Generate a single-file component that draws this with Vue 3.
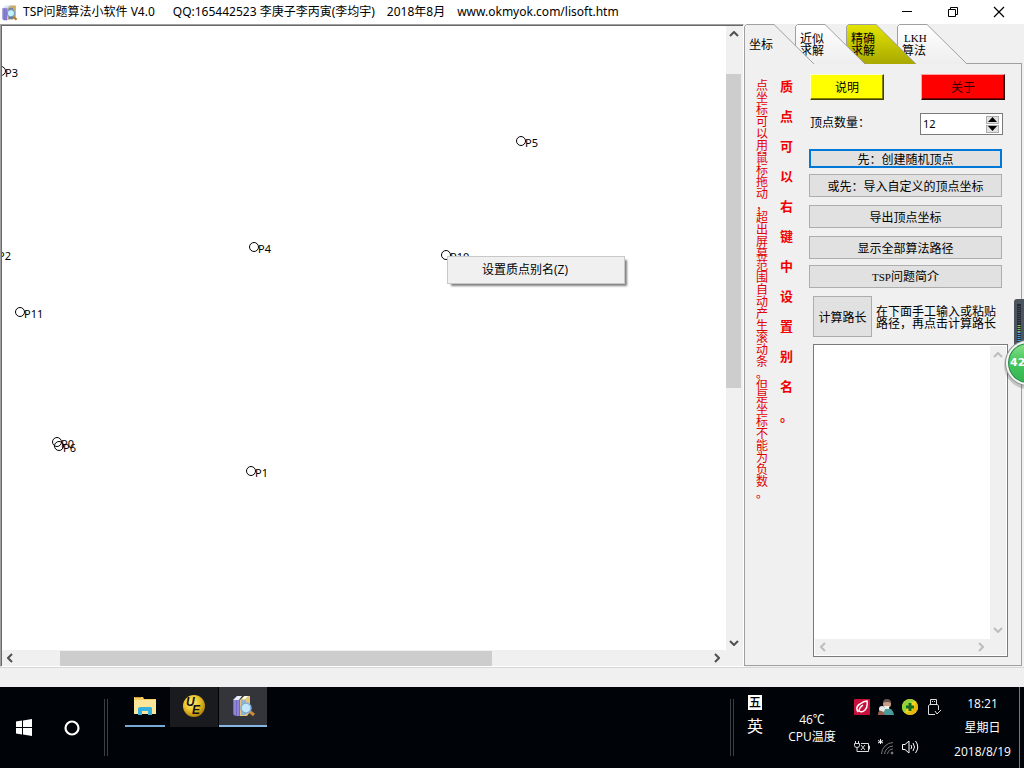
<script setup>
import { ref } from 'vue'

const points = [
  { name: 'P3', x: -1, y: 45 },
  { name: 'P5', x: 519, y: 115 },
  { name: 'P4', x: 252, y: 221 },
  { name: 'P2', x: -8, y: 228 },
  { name: 'P10', x: 444, y: 229 },
  { name: 'P11', x: 18, y: 286 },
  { name: 'P0', x: 55, y: 416 },
  { name: 'P6', x: 57, y: 420 },
  { name: 'P1', x: 249, y: 445 }
]

const tabs = [
  { id: 'coord', lines: ['坐标'], kind: 'active' },
  { id: 'approx', lines: ['近似', '求解'], kind: 'light' },
  { id: 'exact', lines: ['精确', '求解'], kind: 'gold' },
  { id: 'lkh', lines: ['LKH', '算法'], kind: 'light' }
]
const fills = { active: '#f0f0f0', light: 'url(#tabLight)', gold: 'url(#tabGold)' }

const count = ref('12')
const path = ref('')
</script>

<template>
  <div class="screen">
    <header class="titlebar">
      <svg class="app-icon" viewBox="0 0 24 24" aria-hidden="true">
        <path d="M2 6 6 2h5L8 6z" fill="#dfe4fb" />
        <path d="M8 6l3-4h4v17l-5 4z" fill="#b9cdf0" />
        <path d="M2 6h7v17H4l-2-2z" fill="#7468c4" />
        <path d="M4 6v16M7 6v16" stroke="#a9a2e6" />
        <path d="M10 6l4-4h7v16l-4 4h-7z" fill="#c6ac6a" />
        <path d="M11 6h6v15h-6z" fill="#5c76b4" />
        <path d="M16 17l6 5" stroke="#b57b25" stroke-width="3" />
        <circle cx="14" cy="13" r="5" fill="#c8effc" stroke="#6f9fc4" stroke-width="1.5" />
      </svg>
      <h1 class="title">
        <span>TSP问题算法小软件 V4.0</span>
        <span class="t-author">QQ:165442523 李庚子李丙寅(李均宇)</span>
        <span class="t-date">2018年8月</span>
        <span class="t-site">www.okmyok.com/lisoft.htm</span>
      </h1>
      <div class="win-buttons">
        <button aria-label="最小化"><svg width="12" height="12"><path d="M1 5.500h10" stroke="#000" /></svg></button>
        <button aria-label="还原">
          <svg width="12" height="12" fill="none" stroke="#000"><path d="M1.500 3.500h7v7h-7zM3.500 3.500v-2h7v7h-2" /></svg>
        </button>
        <button aria-label="关闭"><svg width="12" height="12"><path d="M1 1l10 10M11 1 1 11" stroke="#000" stroke-width="1.200" /></svg></button>
      </div>
    </header>

    <main class="work">
      <section class="canvas-frame">
        <div class="canvas">
          <svg class="points">
            <g v-for="p in points" :key="p.name">
              <circle :cx="p.x" :cy="p.y" r="4.500" fill="none" stroke="#000" />
              <text :x="p.x + 4" :y="p.y + 6">{{ p.name }}</text>
            </g>
          </svg>
          <div class="menu" role="menu">
            <button role="menuitem">设置质点别名(Z)</button>
          </div>
        </div>
        <div class="vscroll">
          <svg width="10" height="6"><path d="M1 5l4-4 4 4" /></svg>
          <i class="thumb"></i>
          <svg class="end" width="10" height="6"><path d="M1 1l4 4 4-4" /></svg>
        </div>
        <div class="hscroll">
          <svg width="6" height="10"><path d="M5 1 1 5l4 4" /></svg>
          <i class="thumb"></i>
          <svg class="end" width="6" height="10"><path d="M1 1l4 4-4 4" /></svg>
        </div>
      </section>

      <aside class="side">
        <nav class="tabs">
          <button v-for="(t, i) in tabs" :key="t.id" class="tab" :class="[t.kind, 'z' + i]">
            <svg class="tab-shape" width="72" height="40">
              <defs>
                <linearGradient id="tabLight" x1="0" y1="0" x2="0" y2="1">
                  <stop offset="0" stop-color="#fff" /><stop offset="1" stop-color="#eeeeee" />
                </linearGradient>
                <linearGradient id="tabGold" x1="0" y1="0" x2="0" y2="1">
                  <stop offset="0" stop-color="#e4e400" /><stop offset="1" stop-color="#a8a800" />
                </linearGradient>
              </defs>
              <path d="M.5 40V2.500L2.500.5H30L70 40z" :fill="fills[t.kind]" />
              <path d="M.5 40V2.500L2.500.5H30L70 40" fill="none" stroke="#a0a0a0" />
            </svg>
            <span v-for="l in t.lines" :key="l" class="tab-text" :class="{ latin: l === 'LKH' }">{{ l }}</span>
          </button>
        </nav>

        <div class="panel">
          <p class="note">点坐标可以用鼠标拖动，超出屏幕范围自动产生滚动条。但是坐标不能为负数。</p>
          <p class="brush">质点可以右键中设置别名。</p>
          <div class="controls">
            <div class="row top">
              <button class="raised yellow">说明</button>
              <button class="raised red">关于</button>
            </div>
            <div class="row count">
              <label for="count">顶点数量：</label>
              <div class="spin">
                <input id="count" v-model="count" type="text" />
                <div class="spin-btns">
                  <button aria-label="增加"><svg width="9" height="5"><path d="M0 5 4.500 0 9 5z" /></svg></button>
                  <button aria-label="减少"><svg width="9" height="5"><path d="M0 0h9L4.500 5z" /></svg></button>
                </div>
              </div>
            </div>
            <button class="btn focus">先：创建随机顶点</button>
            <button class="btn gap6">或先：导入自定义的顶点坐标</button>
            <button class="btn gap8">导出顶点坐标</button>
            <button class="btn gap8">显示全部算法路径</button>
            <button class="btn gap6"><span class="latin">TSP</span>问题简介</button>
            <div class="row calc">
              <button class="btn calc-btn">计算路长</button>
              <label for="path">在下面手工输入或粘贴<br />路径，再点击计算路长</label>
            </div>
            <div class="memo">
              <textarea id="path" v-model="path"></textarea>
              <div class="memo-v">
                <svg width="10" height="6"><path d="M1 5l4-4 4 4" /></svg>
                <svg width="10" height="6"><path d="M1 1l4 4 4-4" /></svg>
              </div>
              <div class="memo-h">
                <svg width="6" height="10"><path d="M5 1 1 5l4 4" /></svg>
                <svg width="6" height="10"><path d="M1 1l4 4-4 4" /></svg>
              </div>
            </div>
          </div>
        </div>
      </aside>

      <div class="gauge">
        <svg width="20" height="96" viewBox="0 0 20 96">
          <defs>
            <linearGradient id="ball" x1="0" y1="0" x2="0" y2="1">
              <stop offset="0" stop-color="#8be08c" /><stop offset=".45" stop-color="#46c65c" /><stop offset="1" stop-color="#35b552" />
            </linearGradient>
          </defs>
          <path d="M10 50V3q0-3 3-3h11v50z" fill="#4c545e" />
          <path d="M13 48V5h4v43z" fill="#242b36" />
          <path d="M15 7v18" stroke="#3f4958" stroke-width="3" stroke-dasharray="1 1" />
          <path d="M15 26v7" stroke="#8ac05c" stroke-width="3" stroke-dasharray="1 1" />
          <path d="M15 33v14" stroke="#45a5e0" stroke-width="3" stroke-dasharray="1 1" />
          <circle cx="24" cy="66" r="24" fill="#000" opacity=".18" />
          <circle cx="24" cy="64" r="23" fill="#8d9793" />
          <circle cx="24" cy="64" r="22" fill="#f4f8f4" />
          <circle cx="24" cy="64" r="20" fill="#2c8a46" />
          <circle cx="24" cy="64" r="19" fill="url(#ball)" />
          <text x="6" y="67">42</text>
        </svg>
      </div>
    </main>

    <div class="status"></div>

    <footer class="taskbar">
      <button class="sys" aria-label="开始">
        <svg width="16" height="17" viewBox="0 0 16 17" fill="#fff"><path d="M0 2.500 6 1.600V8H0zM7 1.400 16 0v8H7zM0 9h6v6.400L0 14.500zM7 9h9v8l-9-1.400z" /></svg>
      </button>
      <button class="sys" aria-label="搜索">
        <svg width="18" height="18"><circle cx="9" cy="9" r="6.500" fill="none" stroke="#fff" stroke-width="2.200" /></svg>
      </button>
      <i class="divider"></i>
      <div class="apps">
        <button class="app explorer" aria-label="文件资源管理器">
          <svg width="22" height="20" viewBox="0 0 22 20">
            <path d="M0 1h9l1 2h12v15H0z" fill="#f5cf65" /><path d="M0 4h22v14H0z" fill="#fde59a" />
            <path d="M1 1h6v1H1z" fill="#d8942a" /><path d="M4 19v-7l2-1h11l1 1v7h-4v-4H8v4z" fill="#35b0df" />
          </svg>
        </button>
        <button class="app ue" aria-label="UltraEdit">
          <svg width="24" height="24" viewBox="0 0 24 24">
            <defs><radialGradient id="ue" cx=".4" cy=".35" r=".7"><stop offset="0" stop-color="#ffec80" /><stop offset=".5" stop-color="#ecc52c" /><stop offset="1" stop-color="#a87908" /></radialGradient></defs>
            <circle cx="12" cy="12" r="11" fill="url(#ue)" />
            <text x="4" y="12" class="ue-text">U</text><text x="10" y="20" class="ue-text">E</text>
          </svg>
        </button>
        <button class="app current" aria-label="TSP问题算法小软件">
          <svg width="24" height="24" viewBox="0 0 24 24">
            <path d="M2 6 6 2h5L8 6z" fill="#e9ecfd" />
            <path d="M2 6h7v16H4l-2-2z" fill="#7468c4" />
            <path d="M4 6v15M7 6v16" stroke="#a9a2e6" />
            <path d="M9 6l4-4h6v16l-3 4H9z" fill="#e1c67f" />
            <path d="M10 6h5v15h-5z" fill="#8fb4dc" />
            <path d="M11 5l3-3h3l-3 3z" fill="#fff" />
            <path d="M18 17l5 4" stroke="#c98b3a" stroke-width="3" />
            <circle cx="15" cy="14" r="5" fill="#c2e6fb" stroke="#82a9d4" stroke-width="1.500" />
          </svg>
        </button>
      </div>
      <i class="divider right"></i>
      <div class="ime"><b>五</b><span>英</span></div>
      <div class="temp"><span>46℃</span><span>CPU温度</span></div>
      <div class="tray">
        <svg width="16" height="16" viewBox="0 0 16 16"><rect width="16" height="16" rx="1" fill="#c9103c" /><path d="M4 13q-3-5 2-8 4-3 7-3 1 6-2 9-3 3-6 1Q5 9 9 6" fill="none" stroke="#fff" stroke-width="1.500" /></svg>
        <svg width="16" height="16" viewBox="0 0 16 16"><path d="M4 16q-1-6 5-7 6 0 7 7z" fill="#4a9c98" /><circle cx="9" cy="5" r="4" fill="#c99c86" /><path d="M5 4q0-4 4-4t4 4q-4-2-8 0z" fill="#6a5750" /><path d="M6 7h5v3H7z" fill="#eee" /><circle cx="4" cy="10" r="3" fill="#e8e8e8" /><path d="M0 16q0-5 4-4l3 4z" fill="#9b5d4e" /></svg>
        <svg width="16" height="16" viewBox="0 0 16 16"><circle cx="8" cy="8" r="8" fill="#f3d321" /><path d="M0 8a8 8 0 0 1 13-6Q5 3 3 14 0 12 0 8z" fill="#8fd43c" /><path d="M3 14Q12 14 14 3q5 7-2 12-5 2-9-1z" fill="#e7b80c" /><path d="M8 4v8M4 8h8" stroke="#126b20" stroke-width="3" /></svg>
        <svg width="14" height="18" viewBox="0 0 14 18" fill="none" stroke="#ddd"><path d="M3.500 6V1.500h6V6M8 16.500H1.500V8l1-1.500h8l1 1.500v4M8 13l2 3 4-4M5 3.500h1M7 3.500h1" /></svg>
        <svg width="16" height="12" viewBox="0 0 16 12" fill="none" stroke="#ddd"><path d="M1.500 0v2M4.500 0v2M.5 2.500h5v2q0 2-2.500 2t-2.500-2zM3 6.500v4h11.500v-8H7M14.500 5h1v3h-1M7 4l4 5M11 4 7 9" /></svg>
        <svg width="16" height="16" viewBox="0 0 16 16" fill="none" stroke="#777"><path d="M3.500 15A12 12 0 0 1 15 3.500M6.500 15A9 9 0 0 1 15 7M9.500 15a6 6 0 0 1 5.500-5" /><circle cx="14" cy="14" r="1" fill="#999" /><path d="M2.500 0v5M0 1.500l5 2.500M5 1.500 0 4" stroke="#fff" /></svg>
        <svg width="17" height="14" viewBox="0 0 17 14" fill="none" stroke="#fff"><path d="M.5 4.500h2.500l4-3.500v12l-4-3.500H.5zM9 5q1.500 2 0 4M11 3q3 4 0 8M13.500 1q4.500 6 0 12" /></svg>
      </div>
      <div class="clock"><span>18:21</span><span>星期日</span><span>2018/8/19</span></div>
      <i class="desktop"></i>
    </footer>
  </div>
</template>

<style>
body { margin: 0; overflow: hidden; }
</style>

<style scoped>
.screen {
  height: 100vh;
  display: flex;
  flex-direction: column;
  background: #f0f0f0;
  color: #000;
  font: 12px/12px "Noto Sans CJK SC", sans-serif;
}
button {
  font: inherit;
  color: inherit;
  border: 0;
  padding: 0;
  margin: 0;
  background: none;
}
svg { display: block; flex: none; }
.latin { font-family: "Liberation Serif", serif; font-size: 11px; line-height: 12px; }

.titlebar { height: 24px; display: flex; align-items: center; background: #fff; flex: none; }
.app-icon { width: 17px; height: 17px; margin-left: 1px; }
.title {
  margin: 0 0 0 5px;
  flex: 1;
  display: flex;
  font: 400 12px/24px "Noto Sans", "Noto Sans CJK SC", sans-serif;
  white-space: nowrap;
}
.t-author { margin-left: 18px; }
.t-date { margin-left: 12px; }
.t-site { margin-left: 12px; }
.win-buttons { display: flex; }
.win-buttons button { width: 46px; height: 20px; display: grid; place-items: center; }
.win-buttons button:last-child { margin-right: 2px; }

.work { flex: 1; min-height: 0; display: flex; position: relative; }
.canvas-frame {
  flex: 1;
  min-width: 0;
  display: grid;
  grid-template: minmax(0, 1fr) 16px / minmax(0, 1fr) 17px;
  padding: 1px 0 0 1px;
  border: 1px solid #fff;
  border-top-color: #a0a0a0;
  border-left-color: #a0a0a0;
  background: #696969;
}
.canvas { position: relative; overflow: hidden; background: #fff; }
.points { width: 100%; height: 100%; }
.points text { font: 11px "Noto Sans", sans-serif; fill: #000; }
.menu {
  position: absolute;
  left: 445px;
  top: 230px;
  width: 176px;
  height: 26px;
  border: 1px solid #c8c8c8;
  background: #f0f0f0;
  box-shadow: 3px 3px 2px -1px #808080;
}
.menu button { width: 100%; height: 100%; padding-left: 34px; text-align: left; font-family: "Open Sans", "Noto Sans CJK SC", sans-serif; }
.vscroll svg, .hscroll svg { fill: none; stroke: #505050; stroke-width: 2; }
.vscroll { display: flex; flex-direction: column; align-items: center; padding: 5px 2px 4px 0; background: #f0f0f0; }
.hscroll { grid-column: 1 / 3; display: flex; align-items: center; padding: 0 23px 0 5px; background: #f0f0f0; }
.thumb { background: #cdcdcd; }
.vscroll .thumb { width: 15px; height: 51%; margin-top: 37px; }
.hscroll .thumb { height: 15px; width: 432px; margin-left: 47px; }
.vscroll .end { margin-top: auto; }
.hscroll .end { margin-left: auto; }

.side { width: 280px; flex: none; display: flex; flex-direction: column; }
.tabs { height: 39px; flex: none; display: flex; position: relative; }
.tab {
  position: relative;
  width: 51px;
  height: 39px;
  padding-left: 5px;
  display: flex;
  flex-direction: column;
  justify-content: center;
  align-items: flex-start;
}
.z0 { z-index: 4; }
.z1 { z-index: 3; }
.z2 { z-index: 2; }
.z3 { z-index: 1; }
.tab-shape { position: absolute; left: 0; top: 0; }
.tab-text { position: relative; }
.tab-text.latin { padding-left: 2px; }

.panel {
  flex: 1;
  min-height: 0;
  display: flex;
  margin: 0 2px 1px 0;
  padding: 10px 13px 8px 11px;
  border: 1px solid #a0a0a0;
}
.note { margin: 5px 0 0; width: 12px; color: #e00000; word-break: break-all; line-break: anywhere; }
.brush {
  margin: -3px 0 0 12px;
  width: 16px;
  color: #f00000;
  font: 700 13px/30px "Noto Sans CJK SC", sans-serif;
  word-break: break-all;
  line-break: anywhere;
}
.controls { flex: 1; min-width: 0; margin-left: 13px; display: flex; flex-direction: column; }
.row { display: flex; align-items: center; }
.top { justify-content: space-between; padding: 0 3px 0 1px; }
.raised { height: 26px; border: 1px solid; }
.yellow { width: 74px; background: #ffff00; border-color: #ffffd0 #404000 #404000 #ffffd0; box-shadow: inset -1px -1px #808000; }
.red { width: 84px; background: #ff0000; border-color: #ffa0a0 #300000 #300000 #ffa0a0; box-shadow: inset -1px -1px #800000; color: #300000; }
.count { margin-top: 13px; padding: 0 5px 0 1px; justify-content: space-between; align-items: flex-start; }
.count label { line-height: 18px; }
.spin { display: flex; width: 81px; height: 20px; border: 1px solid #7a7a7a; background: #fff; }
.spin input { flex: 1; min-width: 0; border: 0; padding: 0 2px; outline: 0; background: transparent; font: 11px/18px "Noto Sans", sans-serif; color: #000; }
.spin-btns { display: flex; flex-direction: column; justify-content: center; gap: 1px; margin-right: 3px; }
.spin-btns button { width: 13px; height: 8px; display: grid; place-items: center; border: 1px solid #adadad; box-sizing: border-box; background: #e1e1e1; }
.btn { height: 23px; flex: none; margin-right: 6px; border: 1px solid #adadad; background: #e1e1e1; text-align: center; }
.focus { height: 19px; margin-top: 14px; border: 2px solid #0078d7; }
.gap6 { margin-top: 6px; }
.gap8 { margin-top: 8px; }
.calc { margin: 8px 0 7px 4px; }
.calc-btn { width: 59px; height: 41px; margin-right: 4px; }
.calc label { white-space: nowrap; }
.memo {
  flex: 1;
  min-height: 0;
  margin-left: 4px;
  display: grid;
  grid-template: minmax(0, 1fr) 16px / minmax(0, 1fr) 16px;
  padding: 1px;
  border: 1px solid #7a7a7a;
  background: #fff;
}
.memo textarea { border: 0; padding: 2px; outline: 0; resize: none; overflow: hidden; background: #fff; font: inherit; }
.memo svg { fill: none; stroke: #bdbdbd; stroke-width: 2; }
.memo-v { display: flex; flex-direction: column; justify-content: space-between; align-items: center; padding: 6px 0; background: #f0f0f0; }
.memo-h { grid-column: 1 / 3; display: flex; justify-content: space-between; align-items: center; padding: 0 22px 0 5px; background: #f0f0f0; }

.gauge { position: absolute; right: 0; top: 275px; z-index: 5; }
.gauge text { font: 700 11px "DejaVu Sans", sans-serif; fill: #fff; }

.status { height: 19px; flex: none; border-top: 1px solid #d7d7d7; }

.taskbar { height: 81px; flex: none; display: flex; background: #000307; color: #fff; }
.sys { width: 48px; display: grid; place-items: center; }
.divider { width: 2px; height: 57px; margin: 12px 0 0 8px; border: solid #3c3e42; border-width: 0 1px; }
.apps { flex: 1; display: flex; margin-left: 13px; }
.app { width: 48px; height: 40px; box-sizing: border-box; display: grid; place-items: center; border-bottom: 2px solid transparent; }
.explorer { width: 40px; margin: 0 5px 0 4px; border-color: #76a9d6; }
.ue { background: #1a1b1e; }
.ue-text { font: italic 700 12px "Liberation Sans", sans-serif; fill: #111; }
.current { margin-left: 1px; background: #34353a; border-color: #86b7e4; }
.right { margin-left: 0; }
.ime { width: 42px; display: flex; flex-direction: column; align-items: center; padding-top: 8px; }
.ime b { width: 14px; height: 15px; font: 500 12px/14px "Noto Sans CJK SC", sans-serif; text-align: center; background: #fff; color: #000; }
.ime span { margin-top: 6px; font-size: 16px; line-height: 18px; }
.temp, .clock { font: 12px/17px "Open Sans", "Noto Sans CJK SC", sans-serif; display: flex; flex-direction: column; justify-content: center; align-items: center; }
.temp { width: 72px; }
.tray { width: 96px; margin-left: 2px; display: grid; grid-template: 40px 40px / repeat(4, 24px); place-items: center; }
.clock { width: 73px; line-height: 24px; }
.desktop { width: 4px; border-left: 1px solid #77797c; }
</style>
